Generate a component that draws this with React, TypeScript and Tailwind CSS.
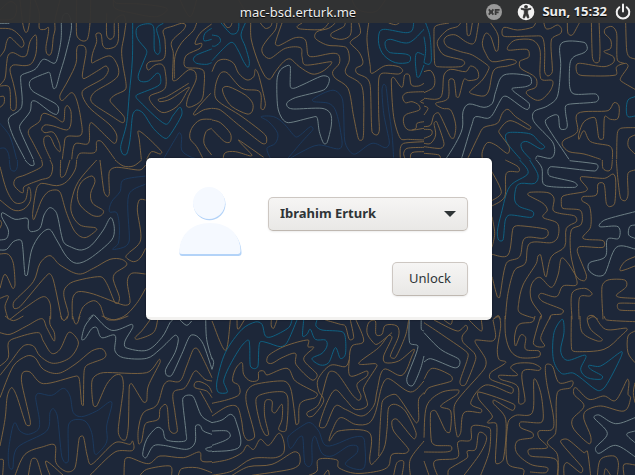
import React from "react";

type Tone = "tan" | "grey" | "teal" | "blue";

const TONES: Record<Tone, string> = {
  tan: "#7a613f",
  grey: "#6f8287",
  teal: "#0f6284",
  blue: "#1c3a5e",
};

interface Tile {
  x: number;
  y: number;
  lines: Partial<Record<Tone, string[]>>;
}

// Each tile holds polylines in thirds of a pixel, from the tile's own corner.
// "z" at the end closes the loop.
const TILES: Tile[] = [
  {
    x: 0,
    y: 0,
    lines: {
      tan: [
        "0,85 35,88 62,110 72,130 65,142 50,130 30,112 20,125 14,150 0,170",
        "0,255 15,235 20,190 25,165 40,158 65,170 80,165 90,125 105,105 110,115 108,160 95,190 75,197 40,195 30,210 40,250 48,290 48,325 40,332 32,325 28,262 0,258",
        "0,290 12,290 12,310 0,322",
        "60,0 68,69 75,95 82,95 88,69 92,0",
        "105,0 118,40 118,85 135,88 145,82 145,100 138,140 140,160 150,165 156,150 160,110 165,90 165,60 180,0",
        "230,0 230,105 245,122 262,118 270,69 272,0",
        "320,40 320,105 330,118 342,108 345,60 370,45 378,69",
        "355,69 355,120 345,140 320,146 308,135 303,102 288,102 290,125 278,160 275,188 290,182 330,168 352,195 355,225 335,245 285,275 272,295 280,312 330,345 368,368 372,350 340,315 330,300 345,285 375,270 378,250 368,190 365,150 372,110 378,69",
        "187,478 192,440 200,410 243,405 243,360 230,300 215,278 190,300 182,300 180,285 205,240 228,190 230,150 235,137 250,137 257,145 258,160 247,225 252,236 300,208 318,198 325,212 310,235 250,270 248,290 270,325 330,375 350,405 345,430 325,415 275,368 268,380 265,430 225,432 215,478",
        "125,478 100,430 85,400 90,385 118,365 125,345 135,340 165,352 190,365 195,325 203,317 213,335 212,375 200,390 160,378 135,375 125,388 135,398 160,397 178,430 180,455 165,440 150,410 133,412 133,435 152,478",
        "230,478 240,460 285,457 290,425 305,425 345,478",
        "440,478 455,455 480,462 485,455 440,410 415,393 418,420 424,478",
        "566,250 500,290 475,298 480,305 510,298 566,262 558,280 540,310 515,330 485,337 455,310 450,288 495,265 495,210 485,193 465,195 445,210 440,195 450,185 492,175 495,120 490,90 520,78 545,70 557,75 550,90 515,125 520,160 518,240 530,240 565,210 585,215 588,240 565,290 560,318 575,320 605,300 612,260 612,215 595,205 560,203 552,190 560,165 600,145 605,130 585,132 600,100 635,72",
        "590,69 580,92 545,128 525,170 523,235",
        "635,325 610,330 585,345 580,342 600,315 632,280",
        "635,358 600,360 575,385 570,415 590,440 610,478",
        "635,385 618,395 612,430 635,465",
        "340,0 350,10 420,12 500,25 470,50 400,40 345,25 340,0",
        "540,0 570,50 590,0",
        "0,60 40,55 50,20 30,5 0,30",
      ],
      grey: [
        "0,70 28,70",
        "184,69 183,120 172,175 162,190 130,178 105,208 65,225 62,240 65,320 30,350 25,365 40,410 75,478",
        "184,69 190,45 205,42 214,69 212,100 195,170 180,220 168,262 160,265 150,220 145,217 95,238 88,255 100,275 165,310 176,325 170,343 150,335 110,305 95,305 90,335 60,375 62,395 100,478",
      ],
      teal: [
        "398,69 397,180 388,280 380,370 362,440 368,462 380,462 390,420 398,345 410,330 430,340 460,385 495,415 510,405 545,345 540,322 520,345 495,372 410,295 410,285 478,255 480,225 470,220 445,243 420,243 415,225 440,160 438,148 412,115 410,85 430,73 455,73 462,90 463,150 472,163 480,155 478,120 470,85 490,70",
        "635,85 615,100 612,122 635,118",
        "635,147 590,165 580,178 590,190 620,193 635,188",
      ],
      blue: [
        "0,370 30,410 50,478",
        "0,445 15,445 25,460 28,478",
        "490,478 515,435 530,410 538,398 545,410 545,450 570,470 600,478",
      ],
    },
  },
  {
    x: 212,
    y: 0,
    lines: {
      teal: [
        "20,60 55,100 72,100 80,85 80,60",
        "0,105 20,110 25,125 10,138 0,138",
        "0,182 35,145 60,127 78,150 95,185 108,202 112,185 100,140 87,105 100,69",
        "605,69 600,92 580,98 520,88 503,95 500,130 515,165 550,188 590,187 595,170 580,162 535,158 522,145 520,125 535,118 590,128 636,88",
        "636,165 615,158 610,180 615,230 622,230 636,195",
      ],
      tan: [
        "35,69 45,82 55,80 60,69",
        "0,215 15,185 40,178 65,190 80,220 105,240 125,230 130,208 140,225 160,310 155,328 147,325 143,275 90,265 45,218 25,220 10,260 15,300 90,350 160,405 163,428 150,430 80,375 25,330 0,325",
        "32,265 50,260 100,285 122,310 120,335 105,342 60,320 38,290 z",
        "0,360 25,368 55,400 55,425 38,425 0,388",
        "155,472 80,420 85,428 120,465 115,468 70,455 40,458 33,478",
        "116,69 118,120 140,190 160,230 175,237 190,215 215,185 235,177 262,200 300,222 330,215 355,195 358,185 280,195 270,170 265,143 220,145 175,175 155,165 150,145 165,120 190,90 195,69",
        "145,69 160,85 175,80 180,69",
        "210,69 190,130 200,137 250,113 280,120 288,165 305,170 360,160 380,165 382,190 362,215 370,235 408,265 425,350 440,418 452,418 455,380 450,260 405,225 400,210 412,180 405,145 380,138 345,135 310,115 315,95 350,85 370,69",
        "270,69 255,80 265,87 330,88 350,69",
        "418,69 415,105 390,118 360,112 358,100 395,80 400,69",
        "440,69 445,100 420,120 415,130 440,155 452,180 450,195 432,205 435,220 465,235 475,260 480,395 495,405 502,390 500,340 500,240 510,220 560,222 572,212 560,200 520,197 480,220 475,200 465,120 470,69",
        "530,69 550,74 562,69",
        "636,420 590,418 565,415 545,350 538,240 545,232 570,262 578,225 592,225 598,255 620,258 636,250",
        "636,275 585,278 572,290 580,308 600,305 620,315 622,330 580,345 575,370 590,390 636,385",
        "636,298 625,305 636,310",
        "636,365 615,370 612,385 600,390",
        "636,425 575,430 565,445 565,478",
        "636,442 585,445 575,460 580,478",
        "636,455 600,458 595,478",
        "80,0 110,40 160,30 200,0",
        "420,0 440,30 490,35 520,0",
      ],
      grey: [
        "235,200 235,260 245,265 270,255 330,228 350,232 350,250 335,270 250,293 225,308 228,322 245,327 330,325 355,340 358,375 345,428 335,430 322,395 315,352 300,352 230,368 210,355 197,320 195,240 205,210 228,196 z",
      ],
      blue: [
        "545,478 540,400 530,330 522,260 515,253 510,270 515,340 525,390 532,430 520,443 480,430 430,462 410,450 398,420 392,300 370,272 340,277 302,298 305,305 350,310 370,330 385,390 385,445 320,435 270,455 230,478",
        "225,478 270,425 303,388 295,380 265,405 250,410 215,370 185,350 147,350 170,365 197,400 190,430 165,445 175,475",
      ],
    },
  },
  {
    x: 424,
    y: 0,
    lines: {
      teal: [
        "5,69 18,110 22,180 15,193 0,188",
        "0,110 5,150 0,188",
        "290,478 250,430 245,405 260,397 320,402 345,425 362,440 350,447 310,425 292,430 295,450 320,478",
        "633,290 612,300 607,330 612,350 633,348",
      ],
      tan: [
        "75,69 35,78 30,100 32,190 40,200 110,200 122,190 115,180 60,165 42,140 42,120 70,90 100,80 110,69",
        "128,69 130,105 138,105 145,69",
        "165,60 155,120 145,132 125,125 95,105 70,108 60,122 70,140 110,155 145,165 190,195 195,205 175,240 137,275 145,282 180,288 195,270 210,210 250,198 275,190 275,182 255,178 205,185 185,160 175,130 185,100 200,110 215,153 222,150 222,105 200,69",
        "335,69 325,82 280,90 240,82 235,105 250,110 330,108 355,112 362,150 362,215 372,228 385,215 382,120 410,100 412,85 400,75 380,85 365,85 358,60",
        "430,69 432,100 445,105 460,80 466,69",
        "502,60 505,170 512,187 525,185 528,150 525,60",
        "633,268 590,242 592,230 612,200 605,190 578,200 575,225 480,227 460,220 457,195 470,190 540,200 568,188 568,170 540,155 560,145 560,120 542,100 545,85 565,80 578,100 580,180 600,190",
        "605,69 608,150 615,170 633,177",
        "252,150 255,135 275,120 325,120 348,150 350,235 385,242 380,270 355,297 335,300 308,282 310,272 335,262 338,240 325,225 290,205 287,185 300,178 315,170 312,150 290,148 z",
        "0,215 20,212 32,235 28,262 0,278",
        "0,295 50,292 60,225 80,208 125,215 140,198 160,210 162,235 135,242 120,238 105,290 97,290 90,240 75,240 72,295 35,310 55,325 80,330 95,375 90,413 80,412 45,340 30,345 20,375 0,380",
        "0,318 12,325 0,345",
        "0,388 22,390 22,405 0,415",
        "0,440 50,445 60,430 38,365 30,370 35,405 20,430 0,430",
        "0,460 45,465 50,478",
        "130,478 165,405 180,382 220,370 235,340 252,328 275,350 320,380 315,388 258,362 225,392 230,405 255,440 250,460 215,435 190,428 175,455 175,478",
        "530,478 480,462 435,455 415,435 420,420 460,395 462,340 552,332 570,308 585,318 582,355 560,358 542,350 538,415 525,415 518,370 510,352 480,365 465,400 465,418 480,392 500,425 555,437 565,450 565,478",
        "633,383 590,385 580,400 578,478",
        "633,405 615,415 613,440 633,462",
      ],
      grey: [
        "65,478 95,430 115,385 117,335 135,312 180,322 205,310 215,275 240,225 315,228 322,250 305,260 265,265 270,275 315,310 312,328 295,322 250,290 235,292 205,345 190,355 155,350 145,370 112,478",
        "435,478 370,380 365,360 390,345 403,348 408,385 425,387 430,375 425,340 425,318 440,312 515,306 524,295 515,282 450,282 437,260 438,190 450,170 480,158 490,145 480,127 412,130 410,200 400,290 370,318 330,335 330,365 385,425 392,455 380,475 340,468 335,478",
      ],
    },
  },
  {
    x: 0,
    y: 160,
    lines: {
      blue: [
        "28,0 32,28 45,33 52,20 52,0",
        "437,48 370,60 360,95 335,125 328,155 350,158 358,200 355,250 338,268 375,260 388,240 386,105 437,72",
      ],
      grey: [
        "75,0 90,15 102,15 100,0",
        "0,270 20,268 40,245 62,240 68,260 75,345 82,345 95,270 120,225 148,208 170,240 200,290 230,310 270,295 335,240 343,205 332,173 310,210 275,255 245,270 215,262 190,245 170,160 150,143 132,165 120,205 95,215 85,205 82,175 45,178 8,158 5,170 25,210 20,235 0,240",
        "265,478 280,465 295,478",
      ],
      tan: [
        "0,20 20,90 45,128 75,122 85,82 92,95 90,125 70,148 40,150 0,120",
        "125,0 125,20 75,45 48,55 42,75 60,95 70,97 72,80 120,60 150,50 158,20 150,0",
        "182,0 182,50 195,45 210,0",
        "230,0 225,30 200,65 170,77 125,70 110,85 98,160 102,178 125,120 145,95 170,90 182,100 200,160 225,215 255,233 290,210 285,203 240,195 215,160 215,120 235,65 290,0",
        "275,48 285,65 272,100 278,130 310,152 300,168 275,165 240,135 232,100 245,65 z",
        "300,0 312,95 322,110 328,100 328,35 350,22 420,30 437,15",
        "345,0 370,18 400,18 425,0",
        "0,180 5,190 0,205",
        "437,120 418,120 412,150 422,240 385,280 378,292 400,305 420,295 437,265",
        "0,282 25,283 40,310 45,375 38,385 15,343 0,385",
        "0,415 25,408 15,440 25,478",
        "30,478 80,440 130,410 150,430 152,478",
        "185,478 160,360 145,342 60,440 42,445 42,425 100,365 120,310 150,287 180,315 235,342 280,325 330,298 365,298 380,315 345,340 340,360 358,410 355,428 345,428 320,370 300,350 220,365 195,385 192,410 205,460 200,478",
        "217,478 218,415 235,395 280,402 370,435 390,428 382,365 395,340 437,342",
        "235,478 250,440 280,422 300,435 320,478 370,470 410,430 437,385",
      ],
    },
  },
  {
    x: 488,
    y: 160,
    lines: {
      teal: [
        "95,0 120,40 65,80 40,160 28,215 32,240 45,240 52,180 65,165 130,172 135,155 95,140 80,120 85,80 100,70 140,70 150,45 125,0",
      ],
      grey: [
        "145,0 162,25 165,70 190,80 260,82 268,75 255,65 185,48 180,30 190,20 320,33 330,22 325,12 245,2",
        "441,155 350,180 335,200 390,200 392,235 358,238 352,290 305,308 302,330 325,347 350,342 385,262 441,267",
        "441,195 425,200 422,225 441,235",
      ],
      tan: [
        "52,0 90,20 92,35 55,40 50,110 12,138",
        "0,15 40,95 12,122",
        "12,170 20,220 12,262",
        "12,283 60,285 75,205 90,197 175,208 180,225 165,235 110,235 95,290 55,310 35,412 28,410 12,350",
        "52,478 60,400 80,330 112,310 125,250 190,248 210,230 208,190 165,172 178,150 165,130 120,105 125,97 180,98 198,115 195,150 215,160 260,168 265,185 235,205 230,260 190,290 175,350 170,345 158,285 150,288 145,310 105,375 92,430 95,458 140,475",
        "185,478 190,465 220,462 225,450 165,425 152,410 160,400 205,410 225,378 265,375 262,345 248,280 250,210 278,195 283,170 275,150 225,145 220,130 225,108 290,95 298,85 278,60 280,50 350,55 375,42 383,60 380,130 365,140 355,130 348,72 330,72 325,105 285,110 282,122 305,140 308,200 285,235 345,242 345,262 275,260 268,275 295,345 290,362 270,355 240,310 220,295 210,345 190,382 155,352 130,375 130,420 160,465 158,478",
        "343,0 345,25 360,33 370,25 373,0",
        "385,0 390,60 398,115 412,122 420,105 420,40 441,30",
        "441,290 410,305 397,332 441,318",
        "345,478 342,380 360,360 410,360 415,380 385,405 395,412 441,415",
        "441,430 392,430 388,440 395,450 441,452",
        "252,478 252,400 290,385 312,400 305,408 275,412 273,478",
        "300,478 315,470 330,478",
        "15,478 30,470 38,478",
      ],
    },
  },
  {
    x: 0,
    y: 316,
    lines: {
      tan: [
        "15,0 40,14 70,0",
        "0,50 30,55 80,30 125,8 140,35 162,75 163,50 150,25 150,0",
        "182,0 192,14 203,0",
        "218,0 225,22 232,22 240,0",
        "0,150 25,125 25,80 50,65 115,50 130,75 155,112 180,100 205,50 225,60 235,85 210,125 160,142 120,120 100,90 70,90 30,140 0,178",
        "0,245 40,150 80,120 105,125 130,160 175,172 225,145 275,105 305,98 318,115 310,128 260,148 252,170 250,268 245,265 238,190 230,180 130,203 90,168 68,170 65,200 90,310 90,328 78,325 50,240 35,215 22,240 15,310 0,390",
        "305,0 345,12 385,0",
        "450,12 425,45 405,65 412,70 460,50 473,12",
        "275,215 280,185 310,170 440,170 478,130 480,140 445,210 440,255 430,258 395,203 388,210 385,330 378,370 365,370 355,350 358,310 370,215 365,180 345,178 320,205 290,270 280,268 z",
        "636,185 610,130 592,98 580,100 560,150 540,195 505,195 490,210 470,268 430,290 415,340 416,383 425,375 432,335 440,320 475,310 480,280 495,265 502,275 508,340 520,352 532,345 525,290 520,230 555,215 580,170 590,165 615,190 636,195",
        "636,245 620,225 585,215 585,200 600,197 625,210 636,230",
        "636,290 620,260 600,225",
        "45,478 75,415 130,392 165,388 168,440 200,467 225,455 238,365 250,362 262,420 275,445 345,380 390,385 398,375 398,403 345,408 270,478",
        "0,430 10,432 8,478",
        "85,478 95,430 110,430 125,478",
        "150,478 138,435 190,478",
        "372,478 375,430 390,425 445,443 480,420 550,425 598,408 605,435 636,437",
        "420,478 440,460 510,450 515,478",
        "535,478 545,458 590,455 636,470",
      ],
      grey: [
        "278,0 255,30 245,70 255,68 275,38 290,35 305,65 345,58 345,105 370,125 440,127 480,100 525,58 535,70 525,110 497,160 500,178 515,178 545,115 570,60 590,60 610,85 636,160",
        "285,0 335,43 395,25 398,35 375,75 378,95 440,103 485,65 510,20 520,10",
        "540,12 560,28 575,15",
        "617,0 620,70 636,130",
        "636,320 605,300 580,242 560,238 548,250 558,350 555,375 500,372 488,342 470,335 440,370 428,415 438,425 460,390 490,388 560,400 585,380 587,330 600,328 610,345 636,355",
        "636,392 617,398 625,405 636,405",
      ],
      blue: [
        "45,320 35,345 25,410 28,455 38,458 52,395 140,345 150,290 160,278 172,300 185,420 195,440 205,435 205,330 220,312 255,315 275,350 283,410 290,415 320,378 320,330 335,258 290,285 245,302 220,290 210,240 190,217 155,238 115,232 107,245 118,310 115,340 85,355 60,345 z",
      ],
    },
  },
  {
    x: 212,
    y: 316,
    lines: {
      teal: [
        "240,12 230,35 180,62 160,60 150,25 130,18 90,40 40,110 15,195 18,228 45,230 42,215 35,195 50,155 85,95 108,72 113,90 115,150 128,158 138,150 143,80 165,80 205,92 225,80 255,12",
        "275,12 272,60 285,55 295,40 310,70 340,72 345,90 330,112 300,128 325,147 350,140 370,95 385,127 400,115 400,65 390,47 330,42 312,30 315,12",
      ],
      grey: [
        "0,125 5,140 0,160",
        "0,320 30,312 55,295 70,310 83,392 0,407",
        "0,345 45,345 55,360 40,373 0,388",
        "592,0 593,80 618,92 585,185 588,205 603,208 625,160 636,120",
        "628,0 628,40 636,45",
      ],
      tan: [
        "0,15 40,103 55,12",
        "75,12 78,40 97,12",
        "178,12 178,30 185,37 195,12",
        "250,112 252,145 300,192 315,175 275,130 305,95 288,92 288,72 220,90 170,118 165,138 180,142 210,125 z",
        "0,262 50,250 82,235 80,208 62,195 70,160 90,140 95,175 115,195 138,192 140,168 155,165 165,177 225,157 250,195 315,232 310,245 265,262 260,320 252,325 245,270 235,215 215,195 130,205 105,225 103,260 128,360 108,373 95,355 88,310 75,272 45,272 0,300",
        "160,357 145,325 132,250 160,232 215,228 228,250 222,343 200,340 210,310 210,265 190,290 180,285 180,255 160,255 158,300 170,355 z",
        "0,440 50,430 90,410 105,388 125,400 145,370 170,388 200,352 215,375 215,410 190,425 120,428 60,465 0,478",
        "60,478 110,452 180,445 245,408 262,415 262,445 235,460 120,478",
        "290,478 315,465 320,430 375,432 380,455 430,472 500,465 530,450 540,415 580,412 590,400 545,345 540,315 555,310 605,368 612,350 580,285 550,265 530,275 525,340 515,400 480,445 473,430 472,350 380,345 352,375 360,345 385,305 430,325 470,322 490,290 510,210 530,188 595,228 636,195",
        "340,12 385,25 400,30 412,70 425,65 415,12",
        "432,12 455,75 420,90 412,130 415,180 465,165 465,180 435,205 447,240 440,253 420,235 375,172 350,170 320,265 285,290 290,302 305,298 335,255 320,225 318,190 355,148 400,152 412,130",
        "322,330 345,260 370,222 400,250 430,280 465,270 460,240 455,215 495,150 490,143 440,142 500,95 530,58 540,65 515,120 520,140 560,135 605,100 600,120 570,178 515,160 495,225 485,270 450,300 400,280 370,270 340,332 z",
        "540,50 495,85 480,75 465,50 470,20 490,15 492,55 510,55 520,28 555,30 560,60 535,120 550,125 580,60 590,12",
        "500,420 510,260 530,240 555,238 612,320 620,310 620,250 636,230",
        "545,478 555,440 575,437 570,478",
        "595,478 595,430 636,375",
        "335,478 348,462 352,478",
      ],
      blue: [
        "237,397 228,380 230,360 270,330 295,320 320,345 345,390 420,365 450,362 458,380 455,457 400,445 435,410 435,390 410,390 360,420 330,412 310,362 300,380 300,440 290,452 278,440 272,362 260,365 z",
      ],
    },
  },
  {
    x: 424,
    y: 316,
    lines: {
      grey: [
        "0,50 50,100 105,130 105,150 90,155 20,128 0,138",
        "633,305 575,323 525,297 510,305 550,352 515,395 525,412 575,388 633,422",
        "633,345 608,355 633,380",
      ],
      teal: [
        "415,10 390,50 388,130 412,172 450,172 520,223 545,210 590,125 592,107 530,150 495,148 500,160 535,180 530,190 490,185 470,160 485,118 430,133 410,105 420,50 z",
      ],
      tan: [
        "0,20 60,60 130,110 130,130 108,195 112,208 125,205 155,130 150,110 118,80 115,60 130,40 125,28 100,45 30,12",
        "60,12 80,25 85,12",
        "135,12 172,45 172,12",
        "207,12 215,60 205,75 155,72 155,82 185,130 180,160 95,260 92,310 100,362 110,350 120,290 170,290 172,280 140,260 185,207 262,232 265,215 200,190 200,170 245,140 225,130 220,100 230,30 225,0 212,5",
        "243,0 245,60 260,105 290,125 345,122 345,105 305,100 305,65 290,57 275,90 272,60 285,25 325,18 333,0",
        "350,0 328,80 340,92 362,90 350,65 380,0",
        "260,155 280,142 325,142 350,155 345,163 295,168 303,255 285,262 280,210 230,190 225,178 280,178 z",
        "270,265 265,283 210,252 208,262 245,310 238,430 215,440 218,325 190,320 205,300 165,250 165,228 z",
        "120,478 170,410 188,365 165,350 155,400 130,405 130,425 75,460 72,478",
        "40,478 32,435 100,425 102,378 140,372 145,330 195,335 200,350 195,410 170,478",
        "298,478 298,460 250,440 252,320 275,298 325,290 330,190 350,230 358,300 350,320 290,318 290,335 325,350 325,365 280,375 278,410 320,445 370,455 365,470 318,468",
        "400,478 395,430 320,420 315,400 370,395 345,365 345,345 385,340 388,300 368,200 365,148 385,150 405,200 445,195 440,215 400,230 395,350 370,380 400,415 402,478",
        "442,0 443,100 460,107 540,100 590,60 608,37 545,40 510,0 490,5 500,40 535,70 520,75 475,50 468,0",
        "540,0 548,12 633,17",
        "633,45 612,60 612,110 633,140",
        "633,200 628,230 633,260",
        "500,360 495,383 450,340 445,310 480,270 450,235 455,215 495,250 540,240 575,253 610,190 615,200 612,235 620,245 600,285 530,270 485,285 480,310 z",
        "500,478 490,405 480,410 430,370 410,378 475,455 470,470 430,440 420,450 420,478",
        "520,478 530,430 570,420 583,440 580,478",
        "600,478 600,445 633,447",
        "540,478 545,458 560,478",
        "0,190 25,157 80,178 82,195 15,215 0,235",
        "0,365 8,270 50,230 103,222 100,235 50,270 80,285 78,348 65,345 35,285 20,290 22,375 35,388 80,390 82,403 65,408 0,408",
        "0,435 15,478",
      ],
    },
  },
];

// Turns a list of points into a smooth Catmull-Rom curve.
function smooth(spec: string): string {
  const closed = spec.endsWith("z");
  const pts = spec
    .replace(" z", "")
    .split(" ")
    .map((p) => p.split(",").map(Number));
  const n = pts.length;
  const at = (i: number) =>
    closed ? pts[(i + n) % n] : pts[Math.min(n - 1, Math.max(0, i))];
  let d = `M${pts[0][0]} ${pts[0][1]}`;
  const count = closed ? n : n - 1;
  for (let i = 0; i < count; i++) {
    const [a, b, c, e] = [at(i - 1), at(i), at(i + 1), at(i + 2)];
    const len = Math.hypot(c[0] - b[0], c[1] - b[1]);
    // Long neighbours must not make short segments overshoot.
    const tangent = (p: number[], q: number[]) => {
      const vx = q[0] - p[0];
      const vy = q[1] - p[1];
      const l = Math.hypot(vx, vy) || 1;
      const k = Math.min(l / 6, len * 0.36) / l;
      return [vx * k, vy * k];
    };
    const t1 = tangent(a, c);
    const t2 = tangent(b, e);
    d += `C${(b[0] + t1[0]).toFixed(1)} ${(b[1] + t1[1]).toFixed(1)} ${(c[0] - t2[0]).toFixed(1)} ${(c[1] - t2[1]).toFixed(1)} ${c[0]} ${c[1]}`;
  }
  return closed ? d + "Z" : d;
}

function Wallpaper() {
  return (
    <svg
      aria-hidden="true"
      viewBox="0 0 635 475"
      preserveAspectRatio="xMidYMid slice"
      className="absolute inset-0 h-full w-full"
    >
      {TILES.map((tile, i) => (
        <g
          key={i}
          transform={`translate(${tile.x} ${tile.y}) scale(0.33333)`}
          fill="none"
          strokeWidth="2.9"
        >
          {(Object.keys(tile.lines) as Tone[]).map((tone) => (
            <path
              key={tone}
              stroke={TONES[tone]}
              d={tile.lines[tone]!.map(smooth).join("")}
            />
          ))}
        </g>
      ))}
    </svg>
  );
}

function SessionIcon() {
  return (
    <svg viewBox="0 0 18 18" className="size-[18px]" aria-hidden="true">
      <circle cx="9" cy="9" r="8" fill="#999999" />
      <path
        d="M3.800 6.400 8.400 11.600M8.400 6.400 3.800 11.600M4.200 9h3.800M10.600 12V6.900h4M10.600 9.400h3"
        stroke="#3a3a3a"
        strokeWidth="1.8"
        fill="none"
      />
    </svg>
  );
}

function AccessibilityIcon() {
  return (
    <svg viewBox="0 0 18 18" className="size-[18px]" aria-hidden="true">
      <circle cx="9" cy="9" r="8.300" fill="#f2f2f2" />
      <circle cx="9" cy="3.800" r="1.900" fill="#333" />
      <path
        d="M4 6.200 7.300 7.200v3L6 14.600l1.400.5L9 11.600l1.600 3.500 1.400-.5-1.300-4.400v-3L14 6.200l-.2-1L10 6H8l-3.800-.8z"
        fill="#333"
        stroke="#333"
        strokeWidth=".8"
      />
    </svg>
  );
}

function PowerIcon() {
  return (
    <svg viewBox="0 0 18 18" className="size-[18px]" aria-hidden="true">
      <path
        d="M5.300 4.200a6.300 6.300 0 1 0 7.400 0M9 1.500v7"
        stroke="#f2f2f2"
        strokeWidth="2"
        strokeLinecap="round"
        fill="none"
      />
    </svg>
  );
}

function Avatar() {
  return (
    <svg viewBox="0 0 64 72" className="h-[72px] w-16" role="img" aria-label="User">
      <circle cx="31.500" cy="18.200" r="16" fill="#b3d3f8" />
      <circle cx="31" cy="17" r="16" fill="#f5f9ff" />
      <path d="M1.500 67C2 49 14 38.500 32 38.500S63 49 63.500 67q0 3-3 3H4q-2.500 0-2.500-3z" fill="#b3d3f8" />
      <path d="M1.200 65.500C2 48 14 37 32 37S62 48 62.500 64.500q0 3.500-3 3.500H4q-2.800 0-2.800-2.500z" fill="#f5f9ff" />
    </svg>
  );
}

const control =
  "h-[34px] rounded-[5px] border border-[#cdc7c2] border-b-[#bfb8b1] bg-linear-to-b from-[#f6f5f4] to-[#e9e8e6] text-[13px] text-[#2e3436] shadow-[0_1px_2px_rgba(0,0,0,0.08)]";

export default function App() {
  return (
    <div className="relative flex min-h-screen flex-col overflow-hidden bg-[#1d2739] font-['Noto_Sans',sans-serif]">
      <Wallpaper />
      <header className="relative grid h-[23px] grid-cols-[1fr_auto_1fr] items-center bg-[#333333]/95 pr-[3px] leading-5 text-[#eeeeee] [text-shadow:0_1px_1px_#000]">
        <h1 className="col-start-2 pr-9 text-[13px]">mac-bsd.erturk.me</h1>
        <div className="flex items-center justify-end gap-[7px] text-sm">
          <button type="button" aria-label="Session" className="mr-[7px]">
            <SessionIcon />
          </button>
          <button type="button" aria-label="Accessibility">
            <AccessibilityIcon />
          </button>
          <time className="text-[13px] font-bold">Sun, 15:32</time>
          <button type="button" aria-label="Power">
            <PowerIcon />
          </button>
        </div>
      </header>
      <main className="relative flex grow items-center justify-center pb-5 pl-[3px]">
        <form
          onSubmit={(e) => e.preventDefault()}
          className="flex w-[346px] items-start justify-between rounded-[5px] border-b-[3px] border-[#f3f2f0] bg-white pt-7 pr-6 pb-[21px] pl-8 shadow-[0_0_2px_rgba(0,0,0,0.6)]"
        >
          <Avatar />
          <div className="flex w-[200px] flex-col items-end gap-[31px] pt-[11px]">
            <div className="relative w-full">
              <select
                aria-label="User"
                defaultValue="ie"
                className={`${control} w-full appearance-none pl-[11px] pr-8 font-bold`}
              >
                <option value="ie">Ibrahim Erturk</option>
              </select>
              <svg
                viewBox="0 0 12 6"
                aria-hidden="true"
                className="pointer-events-none absolute top-[14px] right-3 h-1.5 w-3"
              >
                <path d="M0 0h12L6 6z" fill="#2e3436" />
              </svg>
            </div>
            <button type="submit" className={`${control} w-[76px]`}>
              Unlock
            </button>
          </div>
        </form>
      </main>
    </div>
  );
}
